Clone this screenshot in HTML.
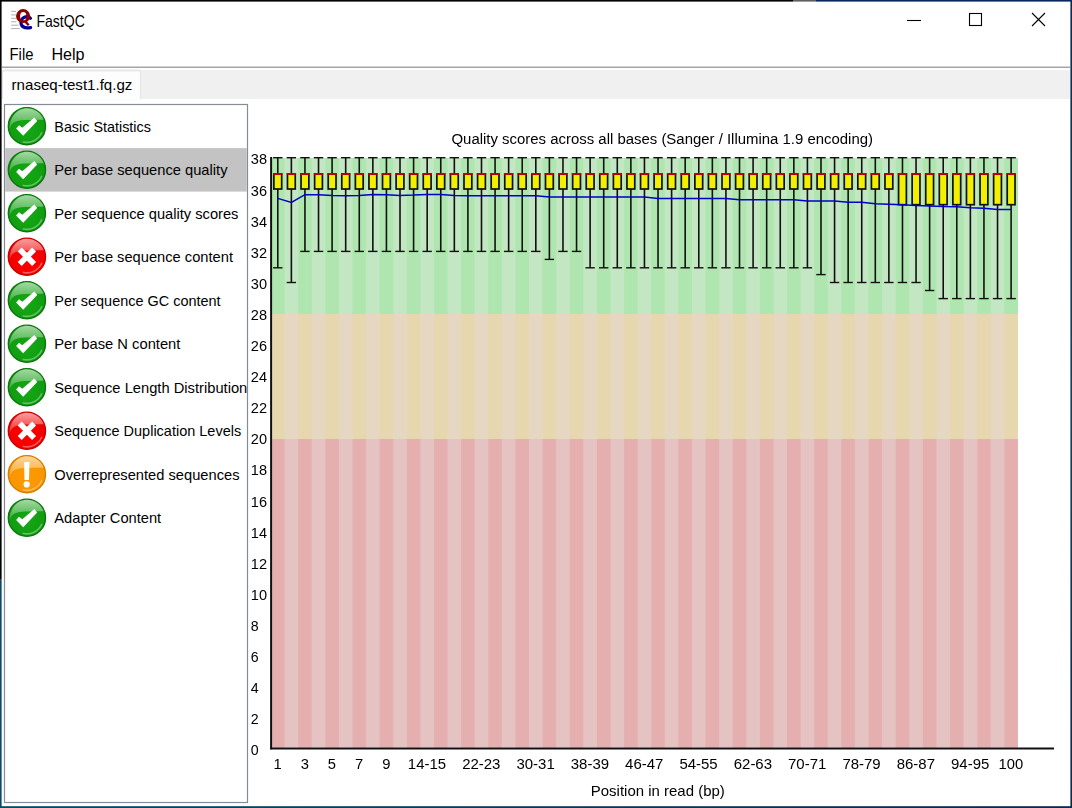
<!DOCTYPE html>
<html><head><meta charset="utf-8"><title>FastQC</title>
<style>html,body{margin:0;padding:0;background:#fff;overflow:hidden}svg{display:block}text{font-family:"Liberation Sans", sans-serif}</style>
</head><body>
<svg width="1072" height="808" viewBox="0 0 1072 808">
<defs><radialGradient id="gGreen" cx="50%" cy="60%" r="55%"><stop offset="0" stop-color="#14a814"/><stop offset="1" stop-color="#109a10"/></radialGradient>
<radialGradient id="gRed" cx="50%" cy="60%" r="55%"><stop offset="0" stop-color="#ff0000"/><stop offset="1" stop-color="#f00000"/></radialGradient>
<radialGradient id="gOrange" cx="50%" cy="60%" r="55%"><stop offset="0" stop-color="#ff9a00"/><stop offset="1" stop-color="#f89400"/></radialGradient>
<linearGradient id="gloss" x1="0" y1="0" x2="0" y2="1"><stop offset="0" stop-color="#fff" stop-opacity="0.62"/><stop offset="1" stop-color="#fff" stop-opacity="0.15"/></linearGradient><filter id="nop" filterUnits="userSpaceOnUse" x="0" y="0" width="1072" height="808"><feOffset dx="0" dy="0"/></filter><linearGradient id="leftB" x1="0" y1="0" x2="0" y2="1"><stop offset="0" stop-color="#000"/><stop offset="0.6" stop-color="#020202"/><stop offset="1" stop-color="#0a4866"/></linearGradient>
<linearGradient id="rightB" x1="0" y1="0" x2="0" y2="1"><stop offset="0" stop-color="#0a2a58"/><stop offset="0.5" stop-color="#12405f"/><stop offset="1" stop-color="#0a2850"/></linearGradient>
<linearGradient id="botB" x1="0" y1="0" x2="1" y2="0"><stop offset="0" stop-color="#0a4866"/><stop offset="1" stop-color="#0a2850"/></linearGradient></defs>
<rect x="0" y="0" width="1072" height="808" fill="#fff"/>
<line x1="11.2" y1="11.4" x2="16" y2="11.4" stroke="#b0b0b0" stroke-width="1.0"/>
<line x1="11.2" y1="14.9" x2="16" y2="14.9" stroke="#b0b0b0" stroke-width="1.0"/>
<line x1="11.2" y1="18.3" x2="16" y2="18.3" stroke="#b0b0b0" stroke-width="1.0"/>
<line x1="11.2" y1="21.8" x2="16.5" y2="21.8" stroke="#b0b0b0" stroke-width="1.0"/>
<line x1="11.2" y1="25.2" x2="18.5" y2="25.2" stroke="#b0b0b0" stroke-width="1.0"/>
<line x1="11.2" y1="28.6" x2="19.8" y2="28.6" stroke="#b0b0b0" stroke-width="1.0"/>
<path d="M30.4 18.3 C29 16.6 26.6 16.3 24.4 17.2 C21.6 18.4 20.6 21.5 21.2 24 C22 27 25.6 28.3 30.6 27.6" fill="none" stroke="#000099" stroke-width="3.3" stroke-linecap="round"/>
<path fill-rule="evenodd" fill="#8b0000" d="M16 16.05 A7.1 6.95 0 1 0 30.2 16.05 A7.1 6.95 0 1 0 16 16.05 Z M20.1 16.35 A3.15 4.25 0 1 0 26.4 16.35 A3.15 4.25 0 1 0 20.1 16.35 Z"/>
<path d="M22.8 20.4 L26.0 20.4 L29.6 24.4 L27.8 26.0 Z" fill="#8b0000"/>
<text x="36.40" y="27.00" font-size="16.5" textLength="48.5" lengthAdjust="spacingAndGlyphs" fill="#000">FastQC</text>
<line x1="907" y1="20.5" x2="921" y2="20.5" stroke="#000" stroke-width="1.1"/>
<rect x="969.5" y="13.5" width="12" height="12" fill="none" stroke="#000" stroke-width="1.1"/>
<path d="M1032 13 L1045 26 M1045 13 L1032 26" stroke="#000" stroke-width="1.1"/>
<text x="9.60" y="59.70" font-size="16" textLength="23.8" lengthAdjust="spacingAndGlyphs" fill="#000">File</text>
<text x="51.40" y="59.70" font-size="16" textLength="33.2" lengthAdjust="spacingAndGlyphs" fill="#000">Help</text>
<rect x="2" y="66.6" width="1068" height="1.2" fill="#8f8f8f"/>
<rect x="2" y="70" width="1068" height="29" fill="#f0f0f0"/>
<rect x="2.5" y="70.5" width="138" height="29" fill="#fdfdfd" stroke="#e3e3e3" stroke-width="1"/>
<rect x="3" y="69.6" width="137.5" height="1.8" fill="#e6e6e6"/>
<rect x="2" y="99" width="139" height="2" fill="#fdfdfd"/>
<text x="11.60" y="90.00" font-size="15" textLength="120.8" lengthAdjust="spacingAndGlyphs" fill="#000">rnaseq-test1.fq.gz</text>
<rect x="4.5" y="104.5" width="243" height="698" fill="#fff" stroke="#878b95" stroke-width="1.2"/>
<rect x="5.2" y="148.1" width="241.6" height="43.5" fill="#c3c3c3"/>
<g transform="translate(26.9,126.2)"><circle r="18.6" fill="url(#gGreen)" stroke="#0b780b" stroke-width="1.4"/><path d="M-17.2 3 C-15 -8 -4 -6 16.8 -6.5 C14 -14 7 -18 0 -18 C-10 -18 -17.5 -9 -17.2 3 Z" fill="url(#gloss)"/><path d="M-4.2 15.6 A16.2 16.2 0 0 0 15 6.1" fill="none" stroke="#fff" stroke-opacity="0.35" stroke-width="1.6"/><path d="M-10.8 2.4 L-7.9 -0.9 L-4.6 1.6 L7.4 -8.7 L10.3 -5.1 L-3.7 9.6 Z" fill="#fff"/></g>
<text x="54.30" y="131.60" font-size="14.4" textLength="96.6" lengthAdjust="spacingAndGlyphs" fill="#000">Basic Statistics</text>
<g transform="translate(26.9,169.7)"><circle r="18.6" fill="url(#gGreen)" stroke="#0b780b" stroke-width="1.4"/><path d="M-17.2 3 C-15 -8 -4 -6 16.8 -6.5 C14 -14 7 -18 0 -18 C-10 -18 -17.5 -9 -17.2 3 Z" fill="url(#gloss)"/><path d="M-4.2 15.6 A16.2 16.2 0 0 0 15 6.1" fill="none" stroke="#fff" stroke-opacity="0.35" stroke-width="1.6"/><path d="M-10.8 2.4 L-7.9 -0.9 L-4.6 1.6 L7.4 -8.7 L10.3 -5.1 L-3.7 9.6 Z" fill="#fff"/></g>
<text x="54.30" y="175.10" font-size="14.4" textLength="173.2" lengthAdjust="spacingAndGlyphs" fill="#000">Per base sequence quality</text>
<g transform="translate(26.9,213.2)"><circle r="18.6" fill="url(#gGreen)" stroke="#0b780b" stroke-width="1.4"/><path d="M-17.2 3 C-15 -8 -4 -6 16.8 -6.5 C14 -14 7 -18 0 -18 C-10 -18 -17.5 -9 -17.2 3 Z" fill="url(#gloss)"/><path d="M-4.2 15.6 A16.2 16.2 0 0 0 15 6.1" fill="none" stroke="#fff" stroke-opacity="0.35" stroke-width="1.6"/><path d="M-10.8 2.4 L-7.9 -0.9 L-4.6 1.6 L7.4 -8.7 L10.3 -5.1 L-3.7 9.6 Z" fill="#fff"/></g>
<text x="54.30" y="218.60" font-size="14.4" textLength="184.1" lengthAdjust="spacingAndGlyphs" fill="#000">Per sequence quality scores</text>
<g transform="translate(26.9,256.7)"><circle r="18.6" fill="url(#gRed)" stroke="#c80000" stroke-width="1.4"/><path d="M-17.2 3 C-15 -8 -4 -6 16.8 -6.5 C14 -14 7 -18 0 -18 C-10 -18 -17.5 -9 -17.2 3 Z" fill="url(#gloss)"/><path d="M-4.2 15.6 A16.2 16.2 0 0 0 15 6.1" fill="none" stroke="#fff" stroke-opacity="0.35" stroke-width="1.6"/><path d="M-7.2 -7.2 L7.2 7.2 M7.2 -7.2 L-7.2 7.2" stroke="#fff" stroke-width="5.6" stroke-linecap="butt"/></g>
<text x="54.30" y="262.10" font-size="14.4" textLength="178.7" lengthAdjust="spacingAndGlyphs" fill="#000">Per base sequence content</text>
<g transform="translate(26.9,300.2)"><circle r="18.6" fill="url(#gGreen)" stroke="#0b780b" stroke-width="1.4"/><path d="M-17.2 3 C-15 -8 -4 -6 16.8 -6.5 C14 -14 7 -18 0 -18 C-10 -18 -17.5 -9 -17.2 3 Z" fill="url(#gloss)"/><path d="M-4.2 15.6 A16.2 16.2 0 0 0 15 6.1" fill="none" stroke="#fff" stroke-opacity="0.35" stroke-width="1.6"/><path d="M-10.8 2.4 L-7.9 -0.9 L-4.6 1.6 L7.4 -8.7 L10.3 -5.1 L-3.7 9.6 Z" fill="#fff"/></g>
<text x="54.30" y="305.60" font-size="14.4" textLength="166.3" lengthAdjust="spacingAndGlyphs" fill="#000">Per sequence GC content</text>
<g transform="translate(26.9,343.7)"><circle r="18.6" fill="url(#gGreen)" stroke="#0b780b" stroke-width="1.4"/><path d="M-17.2 3 C-15 -8 -4 -6 16.8 -6.5 C14 -14 7 -18 0 -18 C-10 -18 -17.5 -9 -17.2 3 Z" fill="url(#gloss)"/><path d="M-4.2 15.6 A16.2 16.2 0 0 0 15 6.1" fill="none" stroke="#fff" stroke-opacity="0.35" stroke-width="1.6"/><path d="M-10.8 2.4 L-7.9 -0.9 L-4.6 1.6 L7.4 -8.7 L10.3 -5.1 L-3.7 9.6 Z" fill="#fff"/></g>
<text x="54.30" y="349.10" font-size="14.4" textLength="126.1" lengthAdjust="spacingAndGlyphs" fill="#000">Per base N content</text>
<g transform="translate(26.9,387.2)"><circle r="18.6" fill="url(#gGreen)" stroke="#0b780b" stroke-width="1.4"/><path d="M-17.2 3 C-15 -8 -4 -6 16.8 -6.5 C14 -14 7 -18 0 -18 C-10 -18 -17.5 -9 -17.2 3 Z" fill="url(#gloss)"/><path d="M-4.2 15.6 A16.2 16.2 0 0 0 15 6.1" fill="none" stroke="#fff" stroke-opacity="0.35" stroke-width="1.6"/><path d="M-10.8 2.4 L-7.9 -0.9 L-4.6 1.6 L7.4 -8.7 L10.3 -5.1 L-3.7 9.6 Z" fill="#fff"/></g>
<text x="54.30" y="392.60" font-size="14.4" textLength="193.0" lengthAdjust="spacingAndGlyphs" fill="#000">Sequence Length Distribution</text>
<g transform="translate(26.9,430.7)"><circle r="18.6" fill="url(#gRed)" stroke="#c80000" stroke-width="1.4"/><path d="M-17.2 3 C-15 -8 -4 -6 16.8 -6.5 C14 -14 7 -18 0 -18 C-10 -18 -17.5 -9 -17.2 3 Z" fill="url(#gloss)"/><path d="M-4.2 15.6 A16.2 16.2 0 0 0 15 6.1" fill="none" stroke="#fff" stroke-opacity="0.35" stroke-width="1.6"/><path d="M-7.2 -7.2 L7.2 7.2 M7.2 -7.2 L-7.2 7.2" stroke="#fff" stroke-width="5.6" stroke-linecap="butt"/></g>
<text x="54.30" y="436.10" font-size="14.4" textLength="186.9" lengthAdjust="spacingAndGlyphs" fill="#000">Sequence Duplication Levels</text>
<g transform="translate(26.9,474.2)"><circle r="18.6" fill="url(#gOrange)" stroke="#d08000" stroke-width="1.4"/><path d="M-17.2 3 C-15 -8 -4 -6 16.8 -6.5 C14 -14 7 -18 0 -18 C-10 -18 -17.5 -9 -17.2 3 Z" fill="url(#gloss)"/><path d="M-4.2 15.6 A16.2 16.2 0 0 0 15 6.1" fill="none" stroke="#fff" stroke-opacity="0.35" stroke-width="1.6"/><path d="M-2.9 -12.2 L2.6 -12.2 L2.1 5.8 L-2.4 5.8 Z" fill="#fff"/><circle cx="-0.2" cy="10.2" r="3.1" fill="#fff"/></g>
<text x="54.30" y="479.60" font-size="14.4" textLength="185.2" lengthAdjust="spacingAndGlyphs" fill="#000">Overrepresented sequences</text>
<g transform="translate(26.9,517.7)"><circle r="18.6" fill="url(#gGreen)" stroke="#0b780b" stroke-width="1.4"/><path d="M-17.2 3 C-15 -8 -4 -6 16.8 -6.5 C14 -14 7 -18 0 -18 C-10 -18 -17.5 -9 -17.2 3 Z" fill="url(#gloss)"/><path d="M-4.2 15.6 A16.2 16.2 0 0 0 15 6.1" fill="none" stroke="#fff" stroke-opacity="0.35" stroke-width="1.6"/><path d="M-10.8 2.4 L-7.9 -0.9 L-4.6 1.6 L7.4 -8.7 L10.3 -5.1 L-3.7 9.6 Z" fill="#fff"/></g>
<text x="54.30" y="523.10" font-size="14.4" textLength="106.9" lengthAdjust="spacingAndGlyphs" fill="#000">Adapter Content</text>
<rect x="271.0" y="157.9" width="746.90" height="156.60" fill="#c3e6c3"/>
<rect x="271.0" y="314.0" width="746.90" height="125.50" fill="#e6d7c3"/>
<rect x="271.0" y="439.0" width="746.90" height="308.60" fill="#e6c3c3"/>
<rect x="271.00" y="157.9" width="13.58" height="156.60" fill="#afe6af"/>
<rect x="271.00" y="314.0" width="13.58" height="125.50" fill="#e6d7af"/>
<rect x="271.00" y="439.0" width="13.58" height="308.60" fill="#e6afaf"/>
<rect x="298.16" y="157.9" width="13.58" height="156.60" fill="#afe6af"/>
<rect x="298.16" y="314.0" width="13.58" height="125.50" fill="#e6d7af"/>
<rect x="298.16" y="439.0" width="13.58" height="308.60" fill="#e6afaf"/>
<rect x="325.32" y="157.9" width="13.58" height="156.60" fill="#afe6af"/>
<rect x="325.32" y="314.0" width="13.58" height="125.50" fill="#e6d7af"/>
<rect x="325.32" y="439.0" width="13.58" height="308.60" fill="#e6afaf"/>
<rect x="352.48" y="157.9" width="13.58" height="156.60" fill="#afe6af"/>
<rect x="352.48" y="314.0" width="13.58" height="125.50" fill="#e6d7af"/>
<rect x="352.48" y="439.0" width="13.58" height="308.60" fill="#e6afaf"/>
<rect x="379.64" y="157.9" width="13.58" height="156.60" fill="#afe6af"/>
<rect x="379.64" y="314.0" width="13.58" height="125.50" fill="#e6d7af"/>
<rect x="379.64" y="439.0" width="13.58" height="308.60" fill="#e6afaf"/>
<rect x="406.80" y="157.9" width="13.58" height="156.60" fill="#afe6af"/>
<rect x="406.80" y="314.0" width="13.58" height="125.50" fill="#e6d7af"/>
<rect x="406.80" y="439.0" width="13.58" height="308.60" fill="#e6afaf"/>
<rect x="433.96" y="157.9" width="13.58" height="156.60" fill="#afe6af"/>
<rect x="433.96" y="314.0" width="13.58" height="125.50" fill="#e6d7af"/>
<rect x="433.96" y="439.0" width="13.58" height="308.60" fill="#e6afaf"/>
<rect x="461.12" y="157.9" width="13.58" height="156.60" fill="#afe6af"/>
<rect x="461.12" y="314.0" width="13.58" height="125.50" fill="#e6d7af"/>
<rect x="461.12" y="439.0" width="13.58" height="308.60" fill="#e6afaf"/>
<rect x="488.28" y="157.9" width="13.58" height="156.60" fill="#afe6af"/>
<rect x="488.28" y="314.0" width="13.58" height="125.50" fill="#e6d7af"/>
<rect x="488.28" y="439.0" width="13.58" height="308.60" fill="#e6afaf"/>
<rect x="515.44" y="157.9" width="13.58" height="156.60" fill="#afe6af"/>
<rect x="515.44" y="314.0" width="13.58" height="125.50" fill="#e6d7af"/>
<rect x="515.44" y="439.0" width="13.58" height="308.60" fill="#e6afaf"/>
<rect x="542.60" y="157.9" width="13.58" height="156.60" fill="#afe6af"/>
<rect x="542.60" y="314.0" width="13.58" height="125.50" fill="#e6d7af"/>
<rect x="542.60" y="439.0" width="13.58" height="308.60" fill="#e6afaf"/>
<rect x="569.76" y="157.9" width="13.58" height="156.60" fill="#afe6af"/>
<rect x="569.76" y="314.0" width="13.58" height="125.50" fill="#e6d7af"/>
<rect x="569.76" y="439.0" width="13.58" height="308.60" fill="#e6afaf"/>
<rect x="596.92" y="157.9" width="13.58" height="156.60" fill="#afe6af"/>
<rect x="596.92" y="314.0" width="13.58" height="125.50" fill="#e6d7af"/>
<rect x="596.92" y="439.0" width="13.58" height="308.60" fill="#e6afaf"/>
<rect x="624.08" y="157.9" width="13.58" height="156.60" fill="#afe6af"/>
<rect x="624.08" y="314.0" width="13.58" height="125.50" fill="#e6d7af"/>
<rect x="624.08" y="439.0" width="13.58" height="308.60" fill="#e6afaf"/>
<rect x="651.24" y="157.9" width="13.58" height="156.60" fill="#afe6af"/>
<rect x="651.24" y="314.0" width="13.58" height="125.50" fill="#e6d7af"/>
<rect x="651.24" y="439.0" width="13.58" height="308.60" fill="#e6afaf"/>
<rect x="678.40" y="157.9" width="13.58" height="156.60" fill="#afe6af"/>
<rect x="678.40" y="314.0" width="13.58" height="125.50" fill="#e6d7af"/>
<rect x="678.40" y="439.0" width="13.58" height="308.60" fill="#e6afaf"/>
<rect x="705.56" y="157.9" width="13.58" height="156.60" fill="#afe6af"/>
<rect x="705.56" y="314.0" width="13.58" height="125.50" fill="#e6d7af"/>
<rect x="705.56" y="439.0" width="13.58" height="308.60" fill="#e6afaf"/>
<rect x="732.72" y="157.9" width="13.58" height="156.60" fill="#afe6af"/>
<rect x="732.72" y="314.0" width="13.58" height="125.50" fill="#e6d7af"/>
<rect x="732.72" y="439.0" width="13.58" height="308.60" fill="#e6afaf"/>
<rect x="759.88" y="157.9" width="13.58" height="156.60" fill="#afe6af"/>
<rect x="759.88" y="314.0" width="13.58" height="125.50" fill="#e6d7af"/>
<rect x="759.88" y="439.0" width="13.58" height="308.60" fill="#e6afaf"/>
<rect x="787.04" y="157.9" width="13.58" height="156.60" fill="#afe6af"/>
<rect x="787.04" y="314.0" width="13.58" height="125.50" fill="#e6d7af"/>
<rect x="787.04" y="439.0" width="13.58" height="308.60" fill="#e6afaf"/>
<rect x="814.20" y="157.9" width="13.58" height="156.60" fill="#afe6af"/>
<rect x="814.20" y="314.0" width="13.58" height="125.50" fill="#e6d7af"/>
<rect x="814.20" y="439.0" width="13.58" height="308.60" fill="#e6afaf"/>
<rect x="841.36" y="157.9" width="13.58" height="156.60" fill="#afe6af"/>
<rect x="841.36" y="314.0" width="13.58" height="125.50" fill="#e6d7af"/>
<rect x="841.36" y="439.0" width="13.58" height="308.60" fill="#e6afaf"/>
<rect x="868.52" y="157.9" width="13.58" height="156.60" fill="#afe6af"/>
<rect x="868.52" y="314.0" width="13.58" height="125.50" fill="#e6d7af"/>
<rect x="868.52" y="439.0" width="13.58" height="308.60" fill="#e6afaf"/>
<rect x="895.68" y="157.9" width="13.58" height="156.60" fill="#afe6af"/>
<rect x="895.68" y="314.0" width="13.58" height="125.50" fill="#e6d7af"/>
<rect x="895.68" y="439.0" width="13.58" height="308.60" fill="#e6afaf"/>
<rect x="922.84" y="157.9" width="13.58" height="156.60" fill="#afe6af"/>
<rect x="922.84" y="314.0" width="13.58" height="125.50" fill="#e6d7af"/>
<rect x="922.84" y="439.0" width="13.58" height="308.60" fill="#e6afaf"/>
<rect x="950.00" y="157.9" width="13.58" height="156.60" fill="#afe6af"/>
<rect x="950.00" y="314.0" width="13.58" height="125.50" fill="#e6d7af"/>
<rect x="950.00" y="439.0" width="13.58" height="308.60" fill="#e6afaf"/>
<rect x="977.16" y="157.9" width="13.58" height="156.60" fill="#afe6af"/>
<rect x="977.16" y="314.0" width="13.58" height="125.50" fill="#e6d7af"/>
<rect x="977.16" y="439.0" width="13.58" height="308.60" fill="#e6afaf"/>
<rect x="1004.32" y="157.9" width="13.58" height="156.60" fill="#afe6af"/>
<rect x="1004.32" y="314.0" width="13.58" height="125.50" fill="#e6d7af"/>
<rect x="1004.32" y="439.0" width="13.58" height="308.60" fill="#e6afaf"/>
<g filter="url(#nop)">
<text x="451.50" y="143.70" font-size="14.9" textLength="421.5" lengthAdjust="spacingAndGlyphs" fill="#000">Quality scores across all bases (Sanger / Illumina 1.9 encoding)</text>
<text x="250.80" y="755.30" font-size="15.5" textLength="7.9" lengthAdjust="spacingAndGlyphs" fill="#000">0</text>
<text x="250.80" y="724.20" font-size="15.5" textLength="7.9" lengthAdjust="spacingAndGlyphs" fill="#000">2</text>
<text x="250.80" y="693.10" font-size="15.5" textLength="7.9" lengthAdjust="spacingAndGlyphs" fill="#000">4</text>
<text x="250.80" y="662.00" font-size="15.5" textLength="7.9" lengthAdjust="spacingAndGlyphs" fill="#000">6</text>
<text x="250.80" y="630.90" font-size="15.5" textLength="7.9" lengthAdjust="spacingAndGlyphs" fill="#000">8</text>
<text x="250.80" y="599.80" font-size="15.5" textLength="16.2" lengthAdjust="spacingAndGlyphs" fill="#000">10</text>
<text x="250.80" y="568.70" font-size="15.5" textLength="16.2" lengthAdjust="spacingAndGlyphs" fill="#000">12</text>
<text x="250.80" y="537.60" font-size="15.5" textLength="16.2" lengthAdjust="spacingAndGlyphs" fill="#000">14</text>
<text x="250.80" y="506.50" font-size="15.5" textLength="16.2" lengthAdjust="spacingAndGlyphs" fill="#000">16</text>
<text x="250.80" y="475.40" font-size="15.5" textLength="16.2" lengthAdjust="spacingAndGlyphs" fill="#000">18</text>
<text x="250.80" y="444.30" font-size="15.5" textLength="16.2" lengthAdjust="spacingAndGlyphs" fill="#000">20</text>
<text x="250.80" y="413.20" font-size="15.5" textLength="16.2" lengthAdjust="spacingAndGlyphs" fill="#000">22</text>
<text x="250.80" y="382.10" font-size="15.5" textLength="16.2" lengthAdjust="spacingAndGlyphs" fill="#000">24</text>
<text x="250.80" y="351.00" font-size="15.5" textLength="16.2" lengthAdjust="spacingAndGlyphs" fill="#000">26</text>
<text x="250.80" y="319.90" font-size="15.5" textLength="16.2" lengthAdjust="spacingAndGlyphs" fill="#000">28</text>
<text x="250.80" y="288.80" font-size="15.5" textLength="16.2" lengthAdjust="spacingAndGlyphs" fill="#000">30</text>
<text x="250.80" y="257.70" font-size="15.5" textLength="16.2" lengthAdjust="spacingAndGlyphs" fill="#000">32</text>
<text x="250.80" y="226.60" font-size="15.5" textLength="16.2" lengthAdjust="spacingAndGlyphs" fill="#000">34</text>
<text x="250.80" y="195.50" font-size="15.5" textLength="16.2" lengthAdjust="spacingAndGlyphs" fill="#000">36</text>
<text x="250.80" y="164.40" font-size="15.5" textLength="16.2" lengthAdjust="spacingAndGlyphs" fill="#000">38</text>
<text x="277.59" y="769.20" font-size="15.5" text-anchor="middle" textLength="8.2" lengthAdjust="spacingAndGlyphs" fill="#000">1</text>
<text x="304.75" y="769.20" font-size="15.5" text-anchor="middle" textLength="8.2" lengthAdjust="spacingAndGlyphs" fill="#000">3</text>
<text x="331.91" y="769.20" font-size="15.5" text-anchor="middle" textLength="8.2" lengthAdjust="spacingAndGlyphs" fill="#000">5</text>
<text x="359.07" y="769.20" font-size="15.5" text-anchor="middle" textLength="8.2" lengthAdjust="spacingAndGlyphs" fill="#000">7</text>
<text x="386.23" y="769.20" font-size="15.5" text-anchor="middle" textLength="8.2" lengthAdjust="spacingAndGlyphs" fill="#000">9</text>
<text x="426.97" y="769.20" font-size="15.5" text-anchor="middle" textLength="38.3" lengthAdjust="spacingAndGlyphs" fill="#000">14-15</text>
<text x="481.29" y="769.20" font-size="15.5" text-anchor="middle" textLength="38.3" lengthAdjust="spacingAndGlyphs" fill="#000">22-23</text>
<text x="535.61" y="769.20" font-size="15.5" text-anchor="middle" textLength="38.3" lengthAdjust="spacingAndGlyphs" fill="#000">30-31</text>
<text x="589.93" y="769.20" font-size="15.5" text-anchor="middle" textLength="38.3" lengthAdjust="spacingAndGlyphs" fill="#000">38-39</text>
<text x="644.25" y="769.20" font-size="15.5" text-anchor="middle" textLength="38.3" lengthAdjust="spacingAndGlyphs" fill="#000">46-47</text>
<text x="698.57" y="769.20" font-size="15.5" text-anchor="middle" textLength="38.3" lengthAdjust="spacingAndGlyphs" fill="#000">54-55</text>
<text x="752.89" y="769.20" font-size="15.5" text-anchor="middle" textLength="38.3" lengthAdjust="spacingAndGlyphs" fill="#000">62-63</text>
<text x="807.21" y="769.20" font-size="15.5" text-anchor="middle" textLength="38.3" lengthAdjust="spacingAndGlyphs" fill="#000">70-71</text>
<text x="861.53" y="769.20" font-size="15.5" text-anchor="middle" textLength="38.3" lengthAdjust="spacingAndGlyphs" fill="#000">78-79</text>
<text x="915.85" y="769.20" font-size="15.5" text-anchor="middle" textLength="38.3" lengthAdjust="spacingAndGlyphs" fill="#000">86-87</text>
<text x="970.17" y="769.20" font-size="15.5" text-anchor="middle" textLength="38.3" lengthAdjust="spacingAndGlyphs" fill="#000">94-95</text>
<text x="1010.91" y="769.20" font-size="15.5" text-anchor="middle" textLength="24.6" lengthAdjust="spacingAndGlyphs" fill="#000">100</text>
<text x="590.80" y="796.10" font-size="14.8" textLength="134.0" lengthAdjust="spacingAndGlyphs" fill="#000">Position in read (bp)</text>
</g>
<line x1="277.79" y1="157.70" x2="277.79" y2="174.00" stroke="#111" stroke-width="1.6"/>
<line x1="277.79" y1="189.00" x2="277.79" y2="267.80" stroke="#111" stroke-width="1.6"/>
<line x1="273.09" y1="157.70" x2="282.49" y2="157.70" stroke="#111" stroke-width="1.4"/>
<line x1="273.09" y1="267.80" x2="282.49" y2="267.80" stroke="#111" stroke-width="1.4"/>
<rect x="273.89" y="174.00" width="7.80" height="15.00" fill="#f0f000" stroke="#111" stroke-width="1.7"/>
<line x1="273.09" y1="174.00" x2="282.49" y2="174.00" stroke="#c80000" stroke-width="1.8"/>
<line x1="291.37" y1="157.70" x2="291.37" y2="174.00" stroke="#111" stroke-width="1.6"/>
<line x1="291.37" y1="189.00" x2="291.37" y2="282.50" stroke="#111" stroke-width="1.6"/>
<line x1="286.67" y1="157.70" x2="296.07" y2="157.70" stroke="#111" stroke-width="1.4"/>
<line x1="286.67" y1="282.50" x2="296.07" y2="282.50" stroke="#111" stroke-width="1.4"/>
<rect x="287.47" y="174.00" width="7.80" height="15.00" fill="#f0f000" stroke="#111" stroke-width="1.7"/>
<line x1="286.67" y1="174.00" x2="296.07" y2="174.00" stroke="#c80000" stroke-width="1.8"/>
<line x1="304.95" y1="157.70" x2="304.95" y2="174.00" stroke="#111" stroke-width="1.6"/>
<line x1="304.95" y1="189.00" x2="304.95" y2="251.40" stroke="#111" stroke-width="1.6"/>
<line x1="300.25" y1="157.70" x2="309.65" y2="157.70" stroke="#111" stroke-width="1.4"/>
<line x1="300.25" y1="251.40" x2="309.65" y2="251.40" stroke="#111" stroke-width="1.4"/>
<rect x="301.05" y="174.00" width="7.80" height="15.00" fill="#f0f000" stroke="#111" stroke-width="1.7"/>
<line x1="300.25" y1="174.00" x2="309.65" y2="174.00" stroke="#c80000" stroke-width="1.8"/>
<line x1="318.53" y1="157.70" x2="318.53" y2="174.00" stroke="#111" stroke-width="1.6"/>
<line x1="318.53" y1="189.00" x2="318.53" y2="251.40" stroke="#111" stroke-width="1.6"/>
<line x1="313.83" y1="157.70" x2="323.23" y2="157.70" stroke="#111" stroke-width="1.4"/>
<line x1="313.83" y1="251.40" x2="323.23" y2="251.40" stroke="#111" stroke-width="1.4"/>
<rect x="314.63" y="174.00" width="7.80" height="15.00" fill="#f0f000" stroke="#111" stroke-width="1.7"/>
<line x1="313.83" y1="174.00" x2="323.23" y2="174.00" stroke="#c80000" stroke-width="1.8"/>
<line x1="332.11" y1="157.70" x2="332.11" y2="174.00" stroke="#111" stroke-width="1.6"/>
<line x1="332.11" y1="189.00" x2="332.11" y2="251.40" stroke="#111" stroke-width="1.6"/>
<line x1="327.41" y1="157.70" x2="336.81" y2="157.70" stroke="#111" stroke-width="1.4"/>
<line x1="327.41" y1="251.40" x2="336.81" y2="251.40" stroke="#111" stroke-width="1.4"/>
<rect x="328.21" y="174.00" width="7.80" height="15.00" fill="#f0f000" stroke="#111" stroke-width="1.7"/>
<line x1="327.41" y1="174.00" x2="336.81" y2="174.00" stroke="#c80000" stroke-width="1.8"/>
<line x1="345.69" y1="157.70" x2="345.69" y2="174.00" stroke="#111" stroke-width="1.6"/>
<line x1="345.69" y1="189.00" x2="345.69" y2="251.40" stroke="#111" stroke-width="1.6"/>
<line x1="340.99" y1="157.70" x2="350.39" y2="157.70" stroke="#111" stroke-width="1.4"/>
<line x1="340.99" y1="251.40" x2="350.39" y2="251.40" stroke="#111" stroke-width="1.4"/>
<rect x="341.79" y="174.00" width="7.80" height="15.00" fill="#f0f000" stroke="#111" stroke-width="1.7"/>
<line x1="340.99" y1="174.00" x2="350.39" y2="174.00" stroke="#c80000" stroke-width="1.8"/>
<line x1="359.27" y1="157.70" x2="359.27" y2="174.00" stroke="#111" stroke-width="1.6"/>
<line x1="359.27" y1="189.00" x2="359.27" y2="251.40" stroke="#111" stroke-width="1.6"/>
<line x1="354.57" y1="157.70" x2="363.97" y2="157.70" stroke="#111" stroke-width="1.4"/>
<line x1="354.57" y1="251.40" x2="363.97" y2="251.40" stroke="#111" stroke-width="1.4"/>
<rect x="355.37" y="174.00" width="7.80" height="15.00" fill="#f0f000" stroke="#111" stroke-width="1.7"/>
<line x1="354.57" y1="174.00" x2="363.97" y2="174.00" stroke="#c80000" stroke-width="1.8"/>
<line x1="372.85" y1="157.70" x2="372.85" y2="174.00" stroke="#111" stroke-width="1.6"/>
<line x1="372.85" y1="189.00" x2="372.85" y2="251.40" stroke="#111" stroke-width="1.6"/>
<line x1="368.15" y1="157.70" x2="377.55" y2="157.70" stroke="#111" stroke-width="1.4"/>
<line x1="368.15" y1="251.40" x2="377.55" y2="251.40" stroke="#111" stroke-width="1.4"/>
<rect x="368.95" y="174.00" width="7.80" height="15.00" fill="#f0f000" stroke="#111" stroke-width="1.7"/>
<line x1="368.15" y1="174.00" x2="377.55" y2="174.00" stroke="#c80000" stroke-width="1.8"/>
<line x1="386.43" y1="157.70" x2="386.43" y2="174.00" stroke="#111" stroke-width="1.6"/>
<line x1="386.43" y1="189.00" x2="386.43" y2="251.40" stroke="#111" stroke-width="1.6"/>
<line x1="381.73" y1="157.70" x2="391.13" y2="157.70" stroke="#111" stroke-width="1.4"/>
<line x1="381.73" y1="251.40" x2="391.13" y2="251.40" stroke="#111" stroke-width="1.4"/>
<rect x="382.53" y="174.00" width="7.80" height="15.00" fill="#f0f000" stroke="#111" stroke-width="1.7"/>
<line x1="381.73" y1="174.00" x2="391.13" y2="174.00" stroke="#c80000" stroke-width="1.8"/>
<line x1="400.01" y1="157.70" x2="400.01" y2="174.00" stroke="#111" stroke-width="1.6"/>
<line x1="400.01" y1="189.00" x2="400.01" y2="251.40" stroke="#111" stroke-width="1.6"/>
<line x1="395.31" y1="157.70" x2="404.71" y2="157.70" stroke="#111" stroke-width="1.4"/>
<line x1="395.31" y1="251.40" x2="404.71" y2="251.40" stroke="#111" stroke-width="1.4"/>
<rect x="396.11" y="174.00" width="7.80" height="15.00" fill="#f0f000" stroke="#111" stroke-width="1.7"/>
<line x1="395.31" y1="174.00" x2="404.71" y2="174.00" stroke="#c80000" stroke-width="1.8"/>
<line x1="413.59" y1="157.70" x2="413.59" y2="174.00" stroke="#111" stroke-width="1.6"/>
<line x1="413.59" y1="189.00" x2="413.59" y2="251.40" stroke="#111" stroke-width="1.6"/>
<line x1="408.89" y1="157.70" x2="418.29" y2="157.70" stroke="#111" stroke-width="1.4"/>
<line x1="408.89" y1="251.40" x2="418.29" y2="251.40" stroke="#111" stroke-width="1.4"/>
<rect x="409.69" y="174.00" width="7.80" height="15.00" fill="#f0f000" stroke="#111" stroke-width="1.7"/>
<line x1="408.89" y1="174.00" x2="418.29" y2="174.00" stroke="#c80000" stroke-width="1.8"/>
<line x1="427.17" y1="157.70" x2="427.17" y2="174.00" stroke="#111" stroke-width="1.6"/>
<line x1="427.17" y1="189.00" x2="427.17" y2="251.40" stroke="#111" stroke-width="1.6"/>
<line x1="422.47" y1="157.70" x2="431.87" y2="157.70" stroke="#111" stroke-width="1.4"/>
<line x1="422.47" y1="251.40" x2="431.87" y2="251.40" stroke="#111" stroke-width="1.4"/>
<rect x="423.27" y="174.00" width="7.80" height="15.00" fill="#f0f000" stroke="#111" stroke-width="1.7"/>
<line x1="422.47" y1="174.00" x2="431.87" y2="174.00" stroke="#c80000" stroke-width="1.8"/>
<line x1="440.75" y1="157.70" x2="440.75" y2="174.00" stroke="#111" stroke-width="1.6"/>
<line x1="440.75" y1="189.00" x2="440.75" y2="251.40" stroke="#111" stroke-width="1.6"/>
<line x1="436.05" y1="157.70" x2="445.45" y2="157.70" stroke="#111" stroke-width="1.4"/>
<line x1="436.05" y1="251.40" x2="445.45" y2="251.40" stroke="#111" stroke-width="1.4"/>
<rect x="436.85" y="174.00" width="7.80" height="15.00" fill="#f0f000" stroke="#111" stroke-width="1.7"/>
<line x1="436.05" y1="174.00" x2="445.45" y2="174.00" stroke="#c80000" stroke-width="1.8"/>
<line x1="454.33" y1="157.70" x2="454.33" y2="174.00" stroke="#111" stroke-width="1.6"/>
<line x1="454.33" y1="189.00" x2="454.33" y2="251.40" stroke="#111" stroke-width="1.6"/>
<line x1="449.63" y1="157.70" x2="459.03" y2="157.70" stroke="#111" stroke-width="1.4"/>
<line x1="449.63" y1="251.40" x2="459.03" y2="251.40" stroke="#111" stroke-width="1.4"/>
<rect x="450.43" y="174.00" width="7.80" height="15.00" fill="#f0f000" stroke="#111" stroke-width="1.7"/>
<line x1="449.63" y1="174.00" x2="459.03" y2="174.00" stroke="#c80000" stroke-width="1.8"/>
<line x1="467.91" y1="157.70" x2="467.91" y2="174.00" stroke="#111" stroke-width="1.6"/>
<line x1="467.91" y1="189.00" x2="467.91" y2="251.40" stroke="#111" stroke-width="1.6"/>
<line x1="463.21" y1="157.70" x2="472.61" y2="157.70" stroke="#111" stroke-width="1.4"/>
<line x1="463.21" y1="251.40" x2="472.61" y2="251.40" stroke="#111" stroke-width="1.4"/>
<rect x="464.01" y="174.00" width="7.80" height="15.00" fill="#f0f000" stroke="#111" stroke-width="1.7"/>
<line x1="463.21" y1="174.00" x2="472.61" y2="174.00" stroke="#c80000" stroke-width="1.8"/>
<line x1="481.49" y1="157.70" x2="481.49" y2="174.00" stroke="#111" stroke-width="1.6"/>
<line x1="481.49" y1="189.00" x2="481.49" y2="251.40" stroke="#111" stroke-width="1.6"/>
<line x1="476.79" y1="157.70" x2="486.19" y2="157.70" stroke="#111" stroke-width="1.4"/>
<line x1="476.79" y1="251.40" x2="486.19" y2="251.40" stroke="#111" stroke-width="1.4"/>
<rect x="477.59" y="174.00" width="7.80" height="15.00" fill="#f0f000" stroke="#111" stroke-width="1.7"/>
<line x1="476.79" y1="174.00" x2="486.19" y2="174.00" stroke="#c80000" stroke-width="1.8"/>
<line x1="495.07" y1="157.70" x2="495.07" y2="174.00" stroke="#111" stroke-width="1.6"/>
<line x1="495.07" y1="189.00" x2="495.07" y2="251.40" stroke="#111" stroke-width="1.6"/>
<line x1="490.37" y1="157.70" x2="499.77" y2="157.70" stroke="#111" stroke-width="1.4"/>
<line x1="490.37" y1="251.40" x2="499.77" y2="251.40" stroke="#111" stroke-width="1.4"/>
<rect x="491.17" y="174.00" width="7.80" height="15.00" fill="#f0f000" stroke="#111" stroke-width="1.7"/>
<line x1="490.37" y1="174.00" x2="499.77" y2="174.00" stroke="#c80000" stroke-width="1.8"/>
<line x1="508.65" y1="157.70" x2="508.65" y2="174.00" stroke="#111" stroke-width="1.6"/>
<line x1="508.65" y1="189.00" x2="508.65" y2="251.40" stroke="#111" stroke-width="1.6"/>
<line x1="503.95" y1="157.70" x2="513.35" y2="157.70" stroke="#111" stroke-width="1.4"/>
<line x1="503.95" y1="251.40" x2="513.35" y2="251.40" stroke="#111" stroke-width="1.4"/>
<rect x="504.75" y="174.00" width="7.80" height="15.00" fill="#f0f000" stroke="#111" stroke-width="1.7"/>
<line x1="503.95" y1="174.00" x2="513.35" y2="174.00" stroke="#c80000" stroke-width="1.8"/>
<line x1="522.23" y1="157.70" x2="522.23" y2="174.00" stroke="#111" stroke-width="1.6"/>
<line x1="522.23" y1="189.00" x2="522.23" y2="251.40" stroke="#111" stroke-width="1.6"/>
<line x1="517.53" y1="157.70" x2="526.93" y2="157.70" stroke="#111" stroke-width="1.4"/>
<line x1="517.53" y1="251.40" x2="526.93" y2="251.40" stroke="#111" stroke-width="1.4"/>
<rect x="518.33" y="174.00" width="7.80" height="15.00" fill="#f0f000" stroke="#111" stroke-width="1.7"/>
<line x1="517.53" y1="174.00" x2="526.93" y2="174.00" stroke="#c80000" stroke-width="1.8"/>
<line x1="535.81" y1="157.70" x2="535.81" y2="174.00" stroke="#111" stroke-width="1.6"/>
<line x1="535.81" y1="189.00" x2="535.81" y2="251.40" stroke="#111" stroke-width="1.6"/>
<line x1="531.11" y1="157.70" x2="540.51" y2="157.70" stroke="#111" stroke-width="1.4"/>
<line x1="531.11" y1="251.40" x2="540.51" y2="251.40" stroke="#111" stroke-width="1.4"/>
<rect x="531.91" y="174.00" width="7.80" height="15.00" fill="#f0f000" stroke="#111" stroke-width="1.7"/>
<line x1="531.11" y1="174.00" x2="540.51" y2="174.00" stroke="#c80000" stroke-width="1.8"/>
<line x1="549.39" y1="157.70" x2="549.39" y2="174.00" stroke="#111" stroke-width="1.6"/>
<line x1="549.39" y1="189.00" x2="549.39" y2="259.40" stroke="#111" stroke-width="1.6"/>
<line x1="544.69" y1="157.70" x2="554.09" y2="157.70" stroke="#111" stroke-width="1.4"/>
<line x1="544.69" y1="259.40" x2="554.09" y2="259.40" stroke="#111" stroke-width="1.4"/>
<rect x="545.49" y="174.00" width="7.80" height="15.00" fill="#f0f000" stroke="#111" stroke-width="1.7"/>
<line x1="544.69" y1="174.00" x2="554.09" y2="174.00" stroke="#c80000" stroke-width="1.8"/>
<line x1="562.97" y1="157.70" x2="562.97" y2="174.00" stroke="#111" stroke-width="1.6"/>
<line x1="562.97" y1="189.00" x2="562.97" y2="251.40" stroke="#111" stroke-width="1.6"/>
<line x1="558.27" y1="157.70" x2="567.67" y2="157.70" stroke="#111" stroke-width="1.4"/>
<line x1="558.27" y1="251.40" x2="567.67" y2="251.40" stroke="#111" stroke-width="1.4"/>
<rect x="559.07" y="174.00" width="7.80" height="15.00" fill="#f0f000" stroke="#111" stroke-width="1.7"/>
<line x1="558.27" y1="174.00" x2="567.67" y2="174.00" stroke="#c80000" stroke-width="1.8"/>
<line x1="576.55" y1="157.70" x2="576.55" y2="174.00" stroke="#111" stroke-width="1.6"/>
<line x1="576.55" y1="189.00" x2="576.55" y2="251.40" stroke="#111" stroke-width="1.6"/>
<line x1="571.85" y1="157.70" x2="581.25" y2="157.70" stroke="#111" stroke-width="1.4"/>
<line x1="571.85" y1="251.40" x2="581.25" y2="251.40" stroke="#111" stroke-width="1.4"/>
<rect x="572.65" y="174.00" width="7.80" height="15.00" fill="#f0f000" stroke="#111" stroke-width="1.7"/>
<line x1="571.85" y1="174.00" x2="581.25" y2="174.00" stroke="#c80000" stroke-width="1.8"/>
<line x1="590.13" y1="157.70" x2="590.13" y2="174.00" stroke="#111" stroke-width="1.6"/>
<line x1="590.13" y1="189.00" x2="590.13" y2="267.80" stroke="#111" stroke-width="1.6"/>
<line x1="585.43" y1="157.70" x2="594.83" y2="157.70" stroke="#111" stroke-width="1.4"/>
<line x1="585.43" y1="267.80" x2="594.83" y2="267.80" stroke="#111" stroke-width="1.4"/>
<rect x="586.23" y="174.00" width="7.80" height="15.00" fill="#f0f000" stroke="#111" stroke-width="1.7"/>
<line x1="585.43" y1="174.00" x2="594.83" y2="174.00" stroke="#c80000" stroke-width="1.8"/>
<line x1="603.71" y1="157.70" x2="603.71" y2="174.00" stroke="#111" stroke-width="1.6"/>
<line x1="603.71" y1="189.00" x2="603.71" y2="267.80" stroke="#111" stroke-width="1.6"/>
<line x1="599.01" y1="157.70" x2="608.41" y2="157.70" stroke="#111" stroke-width="1.4"/>
<line x1="599.01" y1="267.80" x2="608.41" y2="267.80" stroke="#111" stroke-width="1.4"/>
<rect x="599.81" y="174.00" width="7.80" height="15.00" fill="#f0f000" stroke="#111" stroke-width="1.7"/>
<line x1="599.01" y1="174.00" x2="608.41" y2="174.00" stroke="#c80000" stroke-width="1.8"/>
<line x1="617.29" y1="157.70" x2="617.29" y2="174.00" stroke="#111" stroke-width="1.6"/>
<line x1="617.29" y1="189.00" x2="617.29" y2="267.80" stroke="#111" stroke-width="1.6"/>
<line x1="612.59" y1="157.70" x2="621.99" y2="157.70" stroke="#111" stroke-width="1.4"/>
<line x1="612.59" y1="267.80" x2="621.99" y2="267.80" stroke="#111" stroke-width="1.4"/>
<rect x="613.39" y="174.00" width="7.80" height="15.00" fill="#f0f000" stroke="#111" stroke-width="1.7"/>
<line x1="612.59" y1="174.00" x2="621.99" y2="174.00" stroke="#c80000" stroke-width="1.8"/>
<line x1="630.87" y1="157.70" x2="630.87" y2="174.00" stroke="#111" stroke-width="1.6"/>
<line x1="630.87" y1="189.00" x2="630.87" y2="267.80" stroke="#111" stroke-width="1.6"/>
<line x1="626.17" y1="157.70" x2="635.57" y2="157.70" stroke="#111" stroke-width="1.4"/>
<line x1="626.17" y1="267.80" x2="635.57" y2="267.80" stroke="#111" stroke-width="1.4"/>
<rect x="626.97" y="174.00" width="7.80" height="15.00" fill="#f0f000" stroke="#111" stroke-width="1.7"/>
<line x1="626.17" y1="174.00" x2="635.57" y2="174.00" stroke="#c80000" stroke-width="1.8"/>
<line x1="644.45" y1="157.70" x2="644.45" y2="174.00" stroke="#111" stroke-width="1.6"/>
<line x1="644.45" y1="189.00" x2="644.45" y2="267.80" stroke="#111" stroke-width="1.6"/>
<line x1="639.75" y1="157.70" x2="649.15" y2="157.70" stroke="#111" stroke-width="1.4"/>
<line x1="639.75" y1="267.80" x2="649.15" y2="267.80" stroke="#111" stroke-width="1.4"/>
<rect x="640.55" y="174.00" width="7.80" height="15.00" fill="#f0f000" stroke="#111" stroke-width="1.7"/>
<line x1="639.75" y1="174.00" x2="649.15" y2="174.00" stroke="#c80000" stroke-width="1.8"/>
<line x1="658.03" y1="157.70" x2="658.03" y2="174.00" stroke="#111" stroke-width="1.6"/>
<line x1="658.03" y1="189.00" x2="658.03" y2="267.80" stroke="#111" stroke-width="1.6"/>
<line x1="653.33" y1="157.70" x2="662.73" y2="157.70" stroke="#111" stroke-width="1.4"/>
<line x1="653.33" y1="267.80" x2="662.73" y2="267.80" stroke="#111" stroke-width="1.4"/>
<rect x="654.13" y="174.00" width="7.80" height="15.00" fill="#f0f000" stroke="#111" stroke-width="1.7"/>
<line x1="653.33" y1="174.00" x2="662.73" y2="174.00" stroke="#c80000" stroke-width="1.8"/>
<line x1="671.61" y1="157.70" x2="671.61" y2="174.00" stroke="#111" stroke-width="1.6"/>
<line x1="671.61" y1="189.00" x2="671.61" y2="267.80" stroke="#111" stroke-width="1.6"/>
<line x1="666.91" y1="157.70" x2="676.31" y2="157.70" stroke="#111" stroke-width="1.4"/>
<line x1="666.91" y1="267.80" x2="676.31" y2="267.80" stroke="#111" stroke-width="1.4"/>
<rect x="667.71" y="174.00" width="7.80" height="15.00" fill="#f0f000" stroke="#111" stroke-width="1.7"/>
<line x1="666.91" y1="174.00" x2="676.31" y2="174.00" stroke="#c80000" stroke-width="1.8"/>
<line x1="685.19" y1="157.70" x2="685.19" y2="174.00" stroke="#111" stroke-width="1.6"/>
<line x1="685.19" y1="189.00" x2="685.19" y2="267.80" stroke="#111" stroke-width="1.6"/>
<line x1="680.49" y1="157.70" x2="689.89" y2="157.70" stroke="#111" stroke-width="1.4"/>
<line x1="680.49" y1="267.80" x2="689.89" y2="267.80" stroke="#111" stroke-width="1.4"/>
<rect x="681.29" y="174.00" width="7.80" height="15.00" fill="#f0f000" stroke="#111" stroke-width="1.7"/>
<line x1="680.49" y1="174.00" x2="689.89" y2="174.00" stroke="#c80000" stroke-width="1.8"/>
<line x1="698.77" y1="157.70" x2="698.77" y2="174.00" stroke="#111" stroke-width="1.6"/>
<line x1="698.77" y1="189.00" x2="698.77" y2="267.80" stroke="#111" stroke-width="1.6"/>
<line x1="694.07" y1="157.70" x2="703.47" y2="157.70" stroke="#111" stroke-width="1.4"/>
<line x1="694.07" y1="267.80" x2="703.47" y2="267.80" stroke="#111" stroke-width="1.4"/>
<rect x="694.87" y="174.00" width="7.80" height="15.00" fill="#f0f000" stroke="#111" stroke-width="1.7"/>
<line x1="694.07" y1="174.00" x2="703.47" y2="174.00" stroke="#c80000" stroke-width="1.8"/>
<line x1="712.35" y1="157.70" x2="712.35" y2="174.00" stroke="#111" stroke-width="1.6"/>
<line x1="712.35" y1="189.00" x2="712.35" y2="267.80" stroke="#111" stroke-width="1.6"/>
<line x1="707.65" y1="157.70" x2="717.05" y2="157.70" stroke="#111" stroke-width="1.4"/>
<line x1="707.65" y1="267.80" x2="717.05" y2="267.80" stroke="#111" stroke-width="1.4"/>
<rect x="708.45" y="174.00" width="7.80" height="15.00" fill="#f0f000" stroke="#111" stroke-width="1.7"/>
<line x1="707.65" y1="174.00" x2="717.05" y2="174.00" stroke="#c80000" stroke-width="1.8"/>
<line x1="725.93" y1="157.70" x2="725.93" y2="174.00" stroke="#111" stroke-width="1.6"/>
<line x1="725.93" y1="189.00" x2="725.93" y2="267.80" stroke="#111" stroke-width="1.6"/>
<line x1="721.23" y1="157.70" x2="730.63" y2="157.70" stroke="#111" stroke-width="1.4"/>
<line x1="721.23" y1="267.80" x2="730.63" y2="267.80" stroke="#111" stroke-width="1.4"/>
<rect x="722.03" y="174.00" width="7.80" height="15.00" fill="#f0f000" stroke="#111" stroke-width="1.7"/>
<line x1="721.23" y1="174.00" x2="730.63" y2="174.00" stroke="#c80000" stroke-width="1.8"/>
<line x1="739.51" y1="157.70" x2="739.51" y2="174.00" stroke="#111" stroke-width="1.6"/>
<line x1="739.51" y1="189.00" x2="739.51" y2="267.80" stroke="#111" stroke-width="1.6"/>
<line x1="734.81" y1="157.70" x2="744.21" y2="157.70" stroke="#111" stroke-width="1.4"/>
<line x1="734.81" y1="267.80" x2="744.21" y2="267.80" stroke="#111" stroke-width="1.4"/>
<rect x="735.61" y="174.00" width="7.80" height="15.00" fill="#f0f000" stroke="#111" stroke-width="1.7"/>
<line x1="734.81" y1="174.00" x2="744.21" y2="174.00" stroke="#c80000" stroke-width="1.8"/>
<line x1="753.09" y1="157.70" x2="753.09" y2="174.00" stroke="#111" stroke-width="1.6"/>
<line x1="753.09" y1="189.00" x2="753.09" y2="267.80" stroke="#111" stroke-width="1.6"/>
<line x1="748.39" y1="157.70" x2="757.79" y2="157.70" stroke="#111" stroke-width="1.4"/>
<line x1="748.39" y1="267.80" x2="757.79" y2="267.80" stroke="#111" stroke-width="1.4"/>
<rect x="749.19" y="174.00" width="7.80" height="15.00" fill="#f0f000" stroke="#111" stroke-width="1.7"/>
<line x1="748.39" y1="174.00" x2="757.79" y2="174.00" stroke="#c80000" stroke-width="1.8"/>
<line x1="766.67" y1="157.70" x2="766.67" y2="174.00" stroke="#111" stroke-width="1.6"/>
<line x1="766.67" y1="189.00" x2="766.67" y2="267.80" stroke="#111" stroke-width="1.6"/>
<line x1="761.97" y1="157.70" x2="771.37" y2="157.70" stroke="#111" stroke-width="1.4"/>
<line x1="761.97" y1="267.80" x2="771.37" y2="267.80" stroke="#111" stroke-width="1.4"/>
<rect x="762.77" y="174.00" width="7.80" height="15.00" fill="#f0f000" stroke="#111" stroke-width="1.7"/>
<line x1="761.97" y1="174.00" x2="771.37" y2="174.00" stroke="#c80000" stroke-width="1.8"/>
<line x1="780.25" y1="157.70" x2="780.25" y2="174.00" stroke="#111" stroke-width="1.6"/>
<line x1="780.25" y1="189.00" x2="780.25" y2="267.80" stroke="#111" stroke-width="1.6"/>
<line x1="775.55" y1="157.70" x2="784.95" y2="157.70" stroke="#111" stroke-width="1.4"/>
<line x1="775.55" y1="267.80" x2="784.95" y2="267.80" stroke="#111" stroke-width="1.4"/>
<rect x="776.35" y="174.00" width="7.80" height="15.00" fill="#f0f000" stroke="#111" stroke-width="1.7"/>
<line x1="775.55" y1="174.00" x2="784.95" y2="174.00" stroke="#c80000" stroke-width="1.8"/>
<line x1="793.83" y1="157.70" x2="793.83" y2="174.00" stroke="#111" stroke-width="1.6"/>
<line x1="793.83" y1="189.00" x2="793.83" y2="267.80" stroke="#111" stroke-width="1.6"/>
<line x1="789.13" y1="157.70" x2="798.53" y2="157.70" stroke="#111" stroke-width="1.4"/>
<line x1="789.13" y1="267.80" x2="798.53" y2="267.80" stroke="#111" stroke-width="1.4"/>
<rect x="789.93" y="174.00" width="7.80" height="15.00" fill="#f0f000" stroke="#111" stroke-width="1.7"/>
<line x1="789.13" y1="174.00" x2="798.53" y2="174.00" stroke="#c80000" stroke-width="1.8"/>
<line x1="807.41" y1="157.70" x2="807.41" y2="174.00" stroke="#111" stroke-width="1.6"/>
<line x1="807.41" y1="189.00" x2="807.41" y2="267.80" stroke="#111" stroke-width="1.6"/>
<line x1="802.71" y1="157.70" x2="812.11" y2="157.70" stroke="#111" stroke-width="1.4"/>
<line x1="802.71" y1="267.80" x2="812.11" y2="267.80" stroke="#111" stroke-width="1.4"/>
<rect x="803.51" y="174.00" width="7.80" height="15.00" fill="#f0f000" stroke="#111" stroke-width="1.7"/>
<line x1="802.71" y1="174.00" x2="812.11" y2="174.00" stroke="#c80000" stroke-width="1.8"/>
<line x1="820.99" y1="157.70" x2="820.99" y2="174.00" stroke="#111" stroke-width="1.6"/>
<line x1="820.99" y1="189.00" x2="820.99" y2="274.60" stroke="#111" stroke-width="1.6"/>
<line x1="816.29" y1="157.70" x2="825.69" y2="157.70" stroke="#111" stroke-width="1.4"/>
<line x1="816.29" y1="274.60" x2="825.69" y2="274.60" stroke="#111" stroke-width="1.4"/>
<rect x="817.09" y="174.00" width="7.80" height="15.00" fill="#f0f000" stroke="#111" stroke-width="1.7"/>
<line x1="816.29" y1="174.00" x2="825.69" y2="174.00" stroke="#c80000" stroke-width="1.8"/>
<line x1="834.57" y1="157.70" x2="834.57" y2="174.00" stroke="#111" stroke-width="1.6"/>
<line x1="834.57" y1="189.00" x2="834.57" y2="282.50" stroke="#111" stroke-width="1.6"/>
<line x1="829.87" y1="157.70" x2="839.27" y2="157.70" stroke="#111" stroke-width="1.4"/>
<line x1="829.87" y1="282.50" x2="839.27" y2="282.50" stroke="#111" stroke-width="1.4"/>
<rect x="830.67" y="174.00" width="7.80" height="15.00" fill="#f0f000" stroke="#111" stroke-width="1.7"/>
<line x1="829.87" y1="174.00" x2="839.27" y2="174.00" stroke="#c80000" stroke-width="1.8"/>
<line x1="848.15" y1="157.70" x2="848.15" y2="174.00" stroke="#111" stroke-width="1.6"/>
<line x1="848.15" y1="189.00" x2="848.15" y2="282.50" stroke="#111" stroke-width="1.6"/>
<line x1="843.45" y1="157.70" x2="852.85" y2="157.70" stroke="#111" stroke-width="1.4"/>
<line x1="843.45" y1="282.50" x2="852.85" y2="282.50" stroke="#111" stroke-width="1.4"/>
<rect x="844.25" y="174.00" width="7.80" height="15.00" fill="#f0f000" stroke="#111" stroke-width="1.7"/>
<line x1="843.45" y1="174.00" x2="852.85" y2="174.00" stroke="#c80000" stroke-width="1.8"/>
<line x1="861.73" y1="157.70" x2="861.73" y2="174.00" stroke="#111" stroke-width="1.6"/>
<line x1="861.73" y1="189.00" x2="861.73" y2="282.50" stroke="#111" stroke-width="1.6"/>
<line x1="857.03" y1="157.70" x2="866.43" y2="157.70" stroke="#111" stroke-width="1.4"/>
<line x1="857.03" y1="282.50" x2="866.43" y2="282.50" stroke="#111" stroke-width="1.4"/>
<rect x="857.83" y="174.00" width="7.80" height="15.00" fill="#f0f000" stroke="#111" stroke-width="1.7"/>
<line x1="857.03" y1="174.00" x2="866.43" y2="174.00" stroke="#c80000" stroke-width="1.8"/>
<line x1="875.31" y1="157.70" x2="875.31" y2="174.00" stroke="#111" stroke-width="1.6"/>
<line x1="875.31" y1="189.00" x2="875.31" y2="282.50" stroke="#111" stroke-width="1.6"/>
<line x1="870.61" y1="157.70" x2="880.01" y2="157.70" stroke="#111" stroke-width="1.4"/>
<line x1="870.61" y1="282.50" x2="880.01" y2="282.50" stroke="#111" stroke-width="1.4"/>
<rect x="871.41" y="174.00" width="7.80" height="15.00" fill="#f0f000" stroke="#111" stroke-width="1.7"/>
<line x1="870.61" y1="174.00" x2="880.01" y2="174.00" stroke="#c80000" stroke-width="1.8"/>
<line x1="888.89" y1="157.70" x2="888.89" y2="174.00" stroke="#111" stroke-width="1.6"/>
<line x1="888.89" y1="189.00" x2="888.89" y2="282.50" stroke="#111" stroke-width="1.6"/>
<line x1="884.19" y1="157.70" x2="893.59" y2="157.70" stroke="#111" stroke-width="1.4"/>
<line x1="884.19" y1="282.50" x2="893.59" y2="282.50" stroke="#111" stroke-width="1.4"/>
<rect x="884.99" y="174.00" width="7.80" height="15.00" fill="#f0f000" stroke="#111" stroke-width="1.7"/>
<line x1="884.19" y1="174.00" x2="893.59" y2="174.00" stroke="#c80000" stroke-width="1.8"/>
<line x1="902.47" y1="157.70" x2="902.47" y2="174.00" stroke="#111" stroke-width="1.6"/>
<line x1="902.47" y1="204.70" x2="902.47" y2="282.50" stroke="#111" stroke-width="1.6"/>
<line x1="897.77" y1="157.70" x2="907.17" y2="157.70" stroke="#111" stroke-width="1.4"/>
<line x1="897.77" y1="282.50" x2="907.17" y2="282.50" stroke="#111" stroke-width="1.4"/>
<rect x="898.57" y="174.00" width="7.80" height="30.70" fill="#f0f000" stroke="#111" stroke-width="1.7"/>
<line x1="897.77" y1="174.00" x2="907.17" y2="174.00" stroke="#c80000" stroke-width="1.8"/>
<line x1="916.05" y1="157.70" x2="916.05" y2="174.00" stroke="#111" stroke-width="1.6"/>
<line x1="916.05" y1="204.70" x2="916.05" y2="282.50" stroke="#111" stroke-width="1.6"/>
<line x1="911.35" y1="157.70" x2="920.75" y2="157.70" stroke="#111" stroke-width="1.4"/>
<line x1="911.35" y1="282.50" x2="920.75" y2="282.50" stroke="#111" stroke-width="1.4"/>
<rect x="912.15" y="174.00" width="7.80" height="30.70" fill="#f0f000" stroke="#111" stroke-width="1.7"/>
<line x1="911.35" y1="174.00" x2="920.75" y2="174.00" stroke="#c80000" stroke-width="1.8"/>
<line x1="929.63" y1="157.70" x2="929.63" y2="174.00" stroke="#111" stroke-width="1.6"/>
<line x1="929.63" y1="204.70" x2="929.63" y2="290.50" stroke="#111" stroke-width="1.6"/>
<line x1="924.93" y1="157.70" x2="934.33" y2="157.70" stroke="#111" stroke-width="1.4"/>
<line x1="924.93" y1="290.50" x2="934.33" y2="290.50" stroke="#111" stroke-width="1.4"/>
<rect x="925.73" y="174.00" width="7.80" height="30.70" fill="#f0f000" stroke="#111" stroke-width="1.7"/>
<line x1="924.93" y1="174.00" x2="934.33" y2="174.00" stroke="#c80000" stroke-width="1.8"/>
<line x1="943.21" y1="157.70" x2="943.21" y2="174.00" stroke="#111" stroke-width="1.6"/>
<line x1="943.21" y1="204.70" x2="943.21" y2="298.60" stroke="#111" stroke-width="1.6"/>
<line x1="938.51" y1="157.70" x2="947.91" y2="157.70" stroke="#111" stroke-width="1.4"/>
<line x1="938.51" y1="298.60" x2="947.91" y2="298.60" stroke="#111" stroke-width="1.4"/>
<rect x="939.31" y="174.00" width="7.80" height="30.70" fill="#f0f000" stroke="#111" stroke-width="1.7"/>
<line x1="938.51" y1="174.00" x2="947.91" y2="174.00" stroke="#c80000" stroke-width="1.8"/>
<line x1="956.79" y1="157.70" x2="956.79" y2="174.00" stroke="#111" stroke-width="1.6"/>
<line x1="956.79" y1="204.70" x2="956.79" y2="298.60" stroke="#111" stroke-width="1.6"/>
<line x1="952.09" y1="157.70" x2="961.49" y2="157.70" stroke="#111" stroke-width="1.4"/>
<line x1="952.09" y1="298.60" x2="961.49" y2="298.60" stroke="#111" stroke-width="1.4"/>
<rect x="952.89" y="174.00" width="7.80" height="30.70" fill="#f0f000" stroke="#111" stroke-width="1.7"/>
<line x1="952.09" y1="174.00" x2="961.49" y2="174.00" stroke="#c80000" stroke-width="1.8"/>
<line x1="970.37" y1="157.70" x2="970.37" y2="174.00" stroke="#111" stroke-width="1.6"/>
<line x1="970.37" y1="204.70" x2="970.37" y2="298.60" stroke="#111" stroke-width="1.6"/>
<line x1="965.67" y1="157.70" x2="975.07" y2="157.70" stroke="#111" stroke-width="1.4"/>
<line x1="965.67" y1="298.60" x2="975.07" y2="298.60" stroke="#111" stroke-width="1.4"/>
<rect x="966.47" y="174.00" width="7.80" height="30.70" fill="#f0f000" stroke="#111" stroke-width="1.7"/>
<line x1="965.67" y1="174.00" x2="975.07" y2="174.00" stroke="#c80000" stroke-width="1.8"/>
<line x1="983.95" y1="157.70" x2="983.95" y2="174.00" stroke="#111" stroke-width="1.6"/>
<line x1="983.95" y1="204.70" x2="983.95" y2="298.60" stroke="#111" stroke-width="1.6"/>
<line x1="979.25" y1="157.70" x2="988.65" y2="157.70" stroke="#111" stroke-width="1.4"/>
<line x1="979.25" y1="298.60" x2="988.65" y2="298.60" stroke="#111" stroke-width="1.4"/>
<rect x="980.05" y="174.00" width="7.80" height="30.70" fill="#f0f000" stroke="#111" stroke-width="1.7"/>
<line x1="979.25" y1="174.00" x2="988.65" y2="174.00" stroke="#c80000" stroke-width="1.8"/>
<line x1="997.53" y1="157.70" x2="997.53" y2="174.00" stroke="#111" stroke-width="1.6"/>
<line x1="997.53" y1="204.70" x2="997.53" y2="298.60" stroke="#111" stroke-width="1.6"/>
<line x1="992.83" y1="157.70" x2="1002.23" y2="157.70" stroke="#111" stroke-width="1.4"/>
<line x1="992.83" y1="298.60" x2="1002.23" y2="298.60" stroke="#111" stroke-width="1.4"/>
<rect x="993.63" y="174.00" width="7.80" height="30.70" fill="#f0f000" stroke="#111" stroke-width="1.7"/>
<line x1="992.83" y1="174.00" x2="1002.23" y2="174.00" stroke="#c80000" stroke-width="1.8"/>
<line x1="1011.11" y1="157.70" x2="1011.11" y2="174.00" stroke="#111" stroke-width="1.6"/>
<line x1="1011.11" y1="204.70" x2="1011.11" y2="298.60" stroke="#111" stroke-width="1.6"/>
<line x1="1006.41" y1="157.70" x2="1015.81" y2="157.70" stroke="#111" stroke-width="1.4"/>
<line x1="1006.41" y1="298.60" x2="1015.81" y2="298.60" stroke="#111" stroke-width="1.4"/>
<rect x="1007.21" y="174.00" width="7.80" height="30.70" fill="#f0f000" stroke="#111" stroke-width="1.7"/>
<line x1="1006.41" y1="174.00" x2="1015.81" y2="174.00" stroke="#c80000" stroke-width="1.8"/>
<polyline points="277.79,198.40 291.37,202.50 304.95,194.70 318.53,194.70 332.11,195.50 345.69,195.80 359.27,195.50 372.85,194.40 386.43,194.70 400.01,195.40 413.59,195.10 427.17,194.40 440.75,194.40 454.33,195.40 467.91,195.70 481.49,195.70 495.07,195.70 508.65,195.70 522.23,195.70 535.81,195.70 549.39,197.10 562.97,197.10 576.55,197.10 590.13,197.10 603.71,197.10 617.29,197.10 630.87,197.10 644.45,197.10 658.03,198.40 671.61,198.40 685.19,198.40 698.77,198.40 712.35,198.40 725.93,198.40 739.51,199.80 753.09,199.80 766.67,199.80 780.25,199.80 793.83,199.80 807.41,201.10 820.99,201.10 834.57,201.10 848.15,202.20 861.73,202.20 875.31,203.80 888.89,204.30 902.47,204.80 916.05,205.40 929.63,205.90 943.21,206.50 956.79,206.70 970.37,207.80 983.95,208.30 997.53,209.40 1011.11,209.40" fill="none" stroke="#0000c8" stroke-width="1.5"/>
<line x1="271.1" y1="157" x2="271.1" y2="749.2" stroke="#111" stroke-width="2"/>
<line x1="270.1" y1="748.5" x2="1054" y2="748.5" stroke="#111" stroke-width="1.9"/>
<rect x="0" y="0" width="793" height="1.6" fill="#030303"/>
<rect x="793" y="0" width="23" height="1.6" fill="#606060"/>
<rect x="816" y="0" width="256" height="1.6" fill="#08275a"/>
<rect x="0" y="0" width="1.6" height="579" fill="#030303"/>
<rect x="0" y="579" width="1.6" height="229" fill="#0a4866"/>
<rect x="1070.4" y="0" width="1.6" height="808" fill="url(#rightB)"/>
<rect x="0" y="806.2" width="1072" height="1.8" fill="url(#botB)"/>
</svg>
</body></html>
